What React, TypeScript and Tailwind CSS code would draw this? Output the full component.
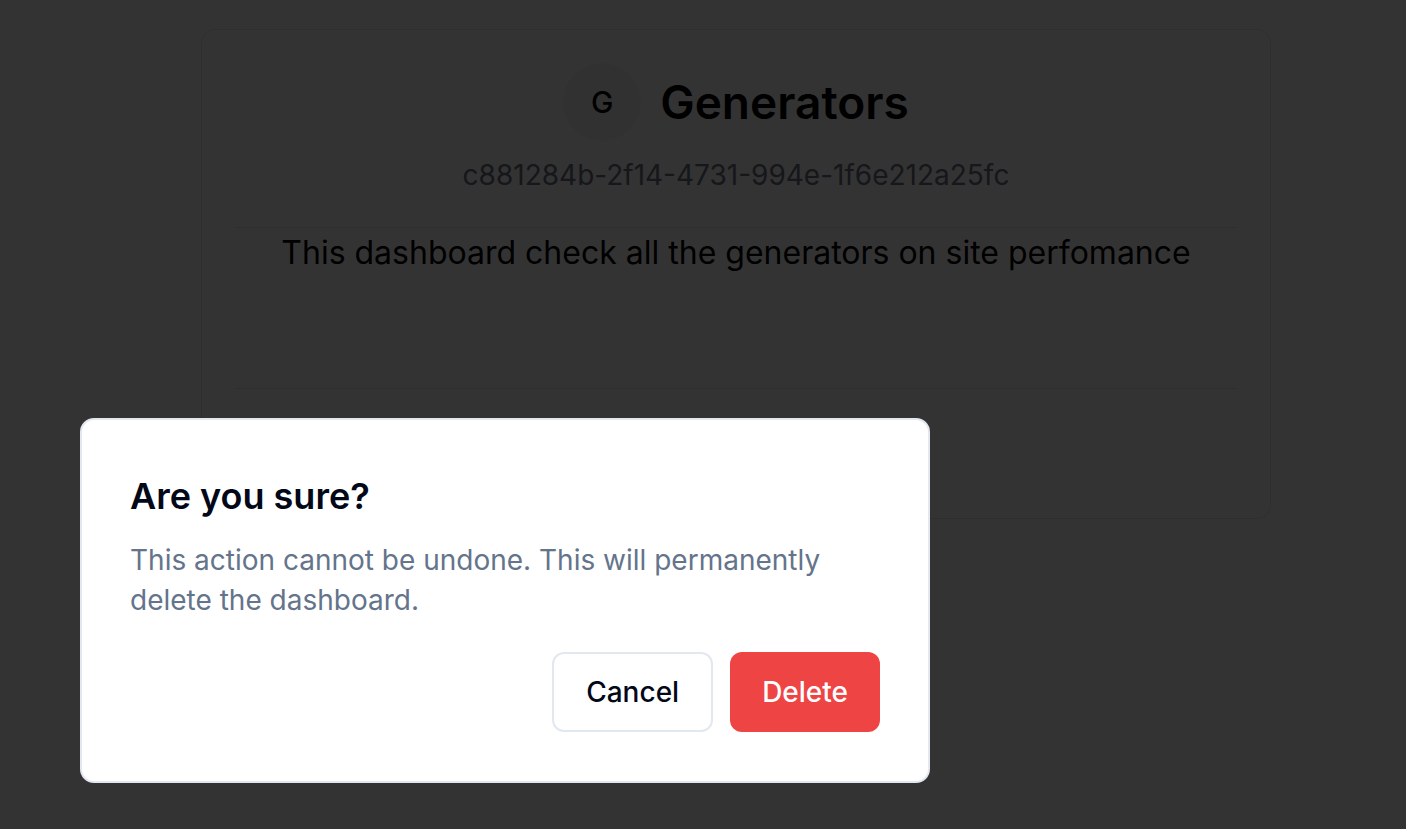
export default function App() {
  return (
    <div className="relative min-h-screen bg-white font-['Inter',sans-serif]">
      {/* dashboard card behind the dialog */}
      <div className="pl-[201px] pt-[29px]">
        <div className="w-[1070px] rounded-[14px] border border-gray-200 bg-white px-[33px] pt-[33px] pb-[33px]">
          <div className="flex items-center justify-center gap-[19px]">
            <div className="flex h-[78px] w-[78px] items-center justify-center rounded-full bg-gray-100 text-[30px] font-medium text-black">
              G
            </div>
            <h1 className="text-[46px] leading-[60px] font-semibold text-black">Generators</h1>
          </div>
          <p className="mt-[14px] text-center text-[28px] leading-[40px] text-gray-500">
            c881284b-2f14-4731-994e-1f6e212a25fc
          </p>
          <div className="mt-[32px] border-t border-gray-200" />
          <p className="mt-[1px] text-center text-[32px] leading-[48px] text-black">
            This dashboard check all the generators on site perfomance
          </p>
          <div className="h-[111px]" />
          <div className="border-t border-gray-200" />
          <div className="h-[96px]" />
        </div>
      </div>

      {/* overlay */}
      <div className="fixed inset-0 bg-black/80" />

      {/* alert dialog */}
      <div className="fixed left-[80px] top-[418px] w-[850px] rounded-[14px] border-2 border-[#e2e8f0] bg-white pl-[48px] pr-[48px] pt-[48px] pb-[49px]">
        <div className="flex flex-col gap-[16px]">
          <h2 className="text-[36px] leading-[56px] font-semibold text-[#020817]">Are you sure?</h2>
          <p className="text-[28px] leading-[40px] text-[#64748b]">
            This action cannot be undone. This will permanently delete the dashboard.
          </p>
        </div>
        <div className="mt-[32px] flex justify-end gap-[17px]">
          <button className="h-[80px] rounded-[12px] border-2 border-[#e2e8f0] bg-white px-[32px] text-[28px] font-medium text-[#020817]">
            Cancel
          </button>
          <button className="h-[80px] rounded-[12px] bg-[#ef4444] px-[32px] text-[28px] font-medium text-white">
            Delete
          </button>
        </div>
      </div>
    </div>
  )
}
